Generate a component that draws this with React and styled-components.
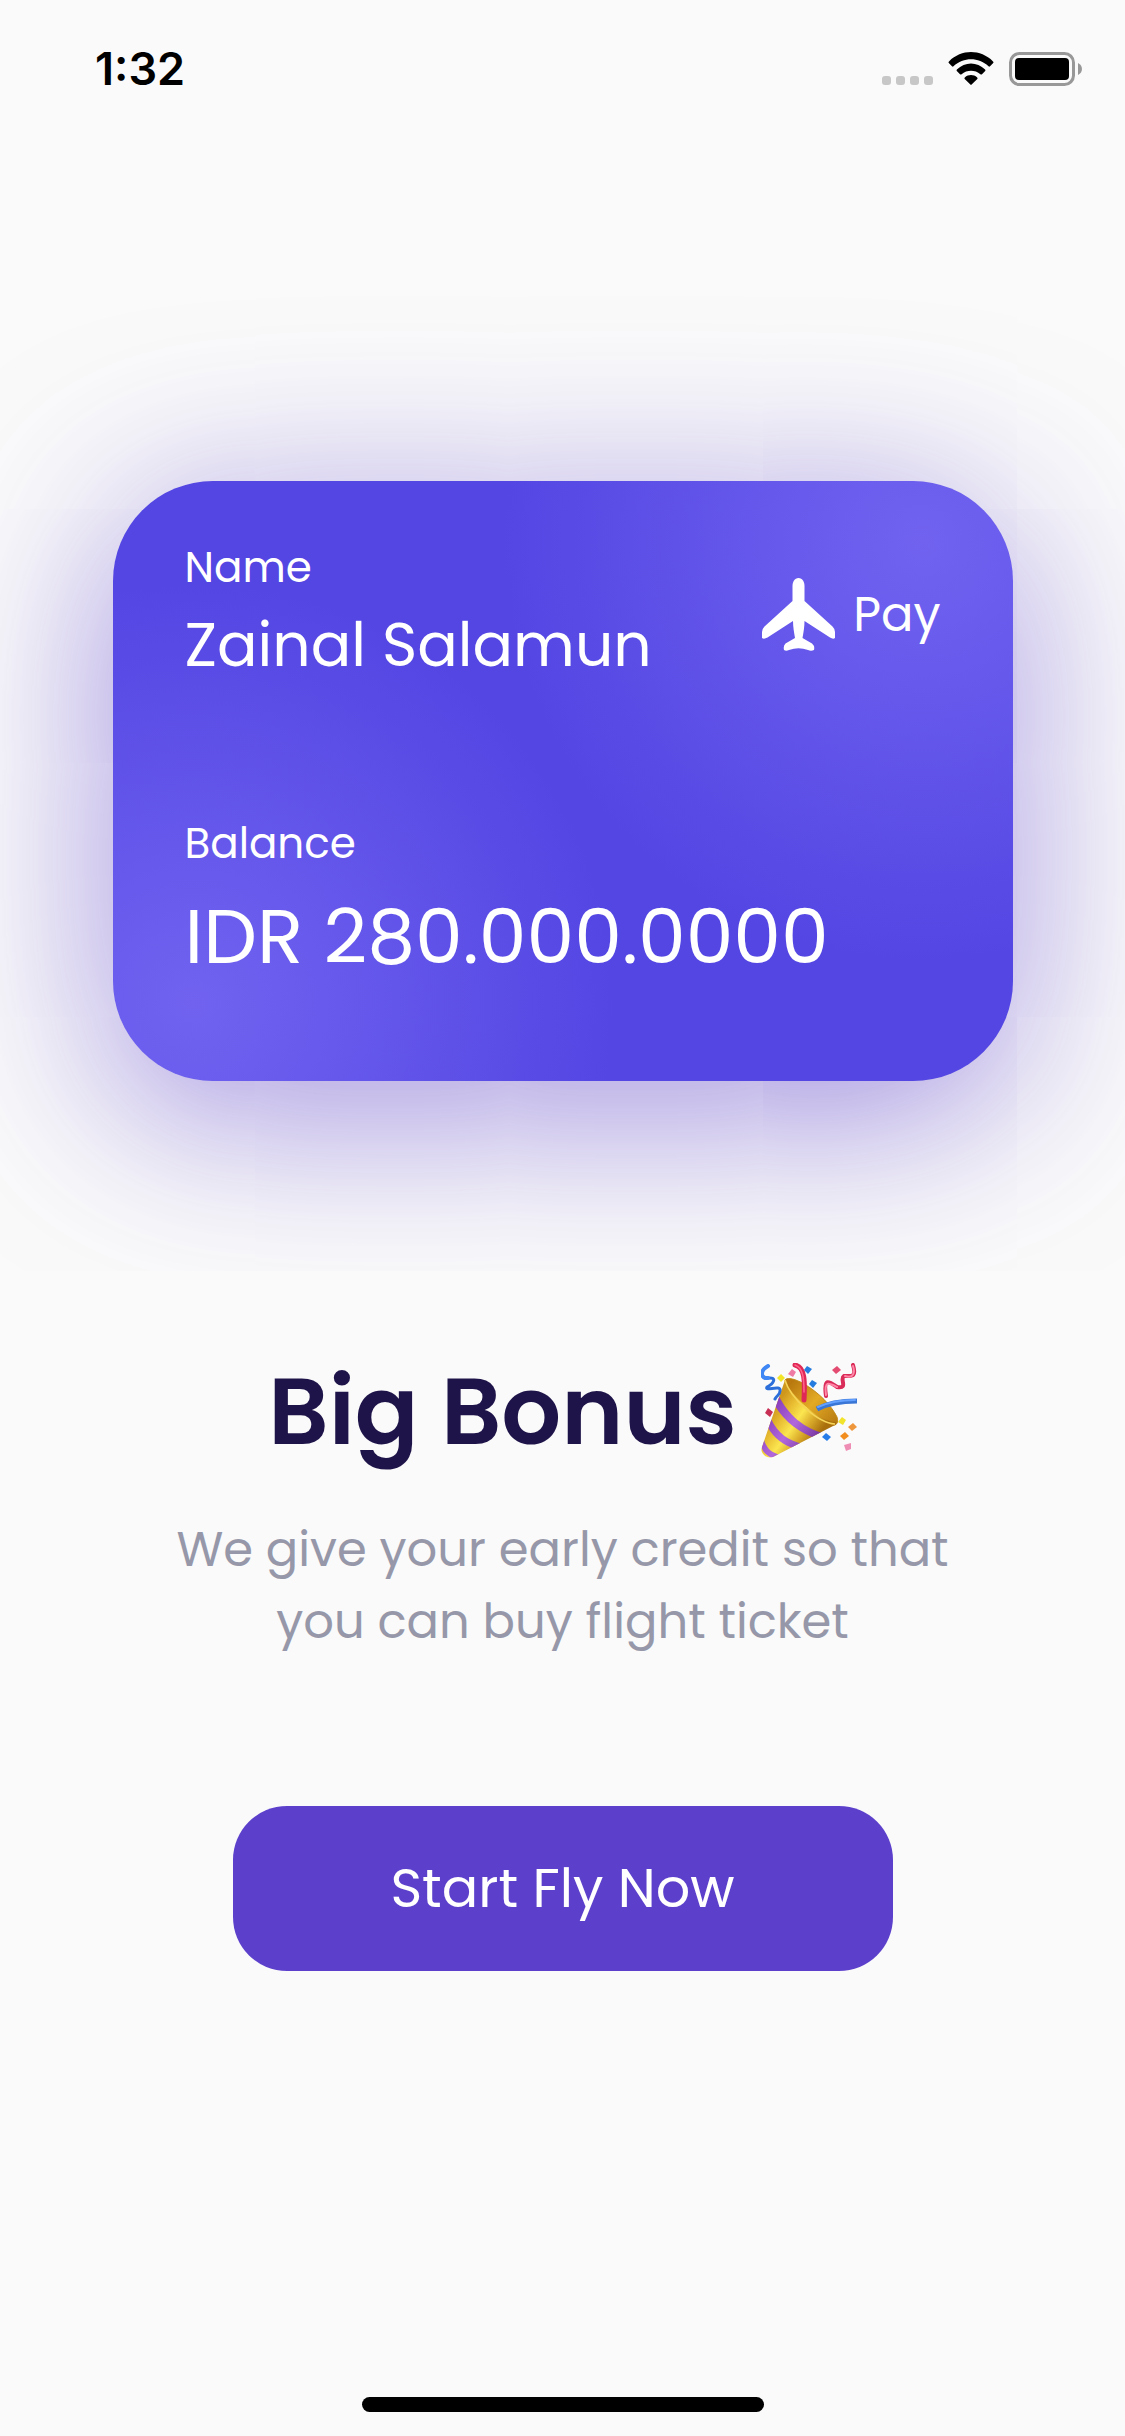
import React from "react";
import styled, { createGlobalStyle } from "styled-components";

const GlobalStyle = createGlobalStyle`
  *, *::before, *::after { box-sizing: border-box; }
  body {
    margin: 0;
    background: #fafafa;
    font-family: Poppins, Inter, "Liberation Sans", sans-serif;
    -webkit-font-smoothing: antialiased;
  }
`;

const Screen = styled.div`
  display: flex;
  flex-direction: column;
  min-height: 100vh;
  overflow: hidden;
`;

const StatusBar = styled.header`
  display: flex;
  align-items: center;
  justify-content: space-between;
  height: 138px;
  padding: 0 43px 0 95px;
`;

const Clock = styled.time`
  color: #000;
  font-family: Inter, sans-serif;
  font-size: 45px;
  font-weight: 600;
  line-height: 54px;
`;

const StatusIcons = styled.div`
  display: flex;
  align-items: flex-end;
  gap: 15px;
`;

const Content = styled.main`
  display: flex;
  flex: 1;
  flex-direction: column;
  align-items: center;
  padding-top: 343px;
`;

const WalletCard = styled.section`
  display: flex;
  flex-direction: column;
  justify-content: space-between;
  width: 80%;
  min-height: 600px;
  padding: 60px 72px 78px;
  border-radius: 100px;
  color: #fff;
  background:
    radial-gradient(circle 420px at 90% 10%, #7163f0 0%, rgba(113, 99, 240, 0) 100%),
    radial-gradient(circle 420px at 9% 87%, #7163f0 0%, rgba(113, 99, 240, 0) 100%),
    #5346e3;
  box-shadow: 0 30px 180px rgba(92, 64, 204, 0.6);
`;

const CardTop = styled.div`
  display: flex;
  align-items: flex-start;
  justify-content: space-between;
`;

const Label = styled.p`
  margin: 0;
  font-size: 42px;
  line-height: 54px;
`;

const HolderName = styled.p`
  margin: 0;
  font-size: 60px;
  line-height: 100px;
`;

const Balance = styled.p`
  margin: 0;
  font-size: 76px;
  line-height: 132px;
`;

const Brand = styled.div`
  display: flex;
  align-items: center;
  gap: 18px;
  padding-top: 37px;
  font-size: 48px;
  line-height: 72px;
`;

const Title = styled.h1`
  display: flex;
  align-items: center;
  gap: 24px;
  margin: 270px 0 0;
  color: #1f1449;
  font-size: 94px;
  font-weight: 600;
  line-height: 120px;
`;

const Description = styled.p`
  max-width: 800px;
  margin: 43px 0 0;
  color: #9698a9;
  font-size: 48px;
  line-height: 72px;
  text-align: center;
`;

const StartButton = styled.button`
  min-width: 660px;
  height: 165px;
  margin-top: 148px;
  border: 0;
  border-radius: 54px;
  color: #fff;
  background: #5c40cc;
  font-family: inherit;
  font-size: 54px;
  line-height: 81px;
  cursor: pointer;
`;

const HomeIndicator = styled.div`
  width: 402px;
  height: 15px;
  margin: auto 0 24px;
  border-radius: 8px;
  background: #000;
`;

const SignalDots = () => (
  <svg width="51" height="10" viewBox="0 0 51 10" fill="#c7c7c7" aria-hidden="true">
    {[0, 14, 28, 42].map((x) => (
      <rect key={x} x={x} y="0" width="9" height="9" rx="3" />
    ))}
  </svg>
);

const WifiIcon = () => (
  <svg width="46" height="34" viewBox="0 0 46 34" aria-hidden="true">
    <path d="M1 11.3Q0 10.3 1 9.4C13.5-3 32.500-3 45 9.400Q46 10.300 45 11.300L42 14.300Q41.300 15 40.500 14.300C30.500 5 15.500 5 5.500 14.300Q4.700 15 4 14.300Z" />
    <path d="M8.800 19Q8.200 18.300 8.900 17.600C17 9.400 29 9.400 37.100 17.600Q37.800 18.300 37.200 19L34 22.200Q33.200 22.900 32.400 22.200C27 17.600 19 17.600 13.600 22.200Q12.800 22.900 12 22.200Z" />
    <path d="M16.700 27Q16 26.200 16.800 25.500C20.500 22.300 25.500 22.300 29.200 25.500Q30 26.200 29.300 27L23.600 32.600Q23 33.200 22.400 32.600Z" />
  </svg>
);

const BatteryIcon = () => (
  <svg width="73" height="34" viewBox="0 0 73 34" aria-hidden="true">
    <rect x="1.500" y="1.500" width="63" height="31" rx="9" fill="none" stroke="#989898" strokeWidth="3" />
    <rect x="6" y="6" width="54" height="22" rx="4" />
    <path d="M69 11C74.300 13.500 74.300 20.500 69 23Z" fill="#989898" />
  </svg>
);

const PlaneIcon = () => (
  <svg width="73" height="73" viewBox="0 0 73 73" fill="#fff" aria-hidden="true">
    <path d="M36.500 0C40.500 0 42.500 4 42.500 8V23L70.500 48.500Q73 51 73 54V60Q71 61.500 68 59.500L42.500 43C42.500 49 41.500 54 40.500 60L50 65.500Q53 68 52 72Q49 73.500 46 72Q36.500 68.500 27 72Q24 73.500 22 72Q21 68 23.500 65.500L33 60C32 54 31 49 31 43L5.500 59.500Q2 61.500 0 60V54Q0 51 2.500 48.500L30.500 23V8C30.500 4 32.500 0 36.500 0Z" />
  </svg>
);

const PartyPopper = () => (
  <svg width="96" height="96" viewBox="0 0 96 96" role="img" aria-label="Party popper">
    <defs>
      <linearGradient id="cone" x1="13" y1="45" x2="55" y2="75" gradientUnits="userSpaceOnUse">
        <stop offset="0" stopColor="#cf981d" />
        <stop offset="0.25" stopColor="#e9bd32" />
        <stop offset="0.5" stopColor="#fbe650" />
        <stop offset="0.72" stopColor="#dcae2c" />
        <stop offset="1" stopColor="#a96f0d" />
      </linearGradient>
      <linearGradient id="mouth" x1="30" y1="20" x2="74" y2="60" gradientUnits="userSpaceOnUse">
        <stop offset="0" stopColor="#b9790f" />
        <stop offset="0.5" stopColor="#e3aa25" />
        <stop offset="1" stopColor="#b87b12" />
      </linearGradient>
      <linearGradient id="stripe" x1="10" y1="40" x2="60" y2="75" gradientUnits="userSpaceOnUse">
        <stop offset="0" stopColor="#8438b8" />
        <stop offset="0.5" stopColor="#b268dc" />
        <stop offset="1" stopColor="#713099" />
      </linearGradient>
      <clipPath id="coneShape">
        <path d="M24 17C29 31 57 59 75 59Q76 61 74 62L12 94Q4 96 1 89Q0 87 1 84Z" />
      </clipPath>
    </defs>
    <path d="M24 17C30 10 64 30 76 54Q78 60 74 62C57 63 27 37 24 17Z" fill="url(#mouth)" stroke="#c18a19" />
    <g clipPath="url(#coneShape)">
      <rect width="96" height="96" fill="url(#cone)" />
      <path d="M18 33C26 50 43 67 67 71L57 76C39 71 23 58 14 43Z" fill="url(#stripe)" />
      <path d="M10 56C17 70 27 78 43 81L34 86C22 82 13 75 7 65Z" fill="url(#stripe)" />
      <path d="M3 77C6 86 11 90 20 92L13 96C6 93 1 89 0 82Z" fill="url(#stripe)" />
    </g>
    <path d="M24 17C29 35 57 60 74 61" fill="none" stroke="#f6d457" strokeWidth="1.500" />
    <g fill="none" strokeLinecap="round">
      <path d="M7 3C-2 8 0 16 7 15C17 14 12 21 6 24C3 29 21 21 19 28C19 32 16 32 14 36" stroke="#2c6fda" strokeWidth="3" />
      <path d="M7 3C-2 8 0 16 7 15" stroke="#3f87f5" strokeWidth="4" />
      <path d="M34 2C44 4 44 18 43 37" stroke="#df2855" strokeWidth="5" />
      <path d="M34 2C42 5 43 14 43 29" stroke="#ff658a" strokeWidth="1.500" />
      <path d="M65 33C62 13 69 19 76 24C88 26 78 16 83 13C90 13 96 15 92 2" stroke="#d92c58" strokeWidth="4" />
      <path d="M65 32C63 17 68 20 76 24M84 13C93 16 94 9 92 3" stroke="#ff86a7" strokeWidth="2" />
      <path d="M56 46C67 40 80 38 96 38" stroke="#3976d6" strokeWidth="5" strokeLinecap="butt" />
      <path d="M57 44C68 39 80 37 94 37" stroke="#65a1ff" strokeWidth="2" />
    </g>
    <g>
      <path d="M20 11L24 15L20 19L16 15Z" fill="#f3e527" />
      <path d="M31 6L35 9L32 14L27 11Z" fill="#ee7ba4" />
      <path d="M46 3L51 6L47 11L43 7Z" fill="#277cdf" />
      <path d="M51 17L56 20L52 25L48 21Z" fill="#277cdf" />
      <path d="M76 3L80 7L75 11L71 7Z" fill="#e34b70" />
      <path d="M7 45L12 49L9 54L4 50Z" fill="#c82f55" />
      <path d="M81 54L85 57L82 62L77 59Z" fill="#f1e42b" />
      <path d="M92 60L96 64L91 68L87 64Z" fill="#ee963b" />
      <path d="M84 69L88 73L83 77L79 73Z" fill="#f28d20" />
      <path d="M65 70L70 74L66 78L61 74Z" fill="#277ce8" />
      <path d="M83 82L90 80L90 86L85 88Z" fill="#ef8eb4" />
    </g>
  </svg>
);

export default function App() {
  return (
    <Screen>
      <GlobalStyle />
      <StatusBar>
        <Clock>1:32</Clock>
        <StatusIcons>
          <SignalDots />
          <WifiIcon />
          <BatteryIcon />
        </StatusIcons>
      </StatusBar>
      <Content>
        <WalletCard>
          <CardTop>
            <div>
              <Label>Name</Label>
              <HolderName>Zainal Salamun</HolderName>
            </div>
            <Brand>
              <PlaneIcon />
              <span>Pay</span>
            </Brand>
          </CardTop>
          <div>
            <Label>Balance</Label>
            <Balance>IDR 280.000.0000</Balance>
          </div>
        </WalletCard>
        <Title>
          Big Bonus
          <PartyPopper />
        </Title>
        <Description>
          We give your early credit so that
          <br />
          you can buy flight ticket
        </Description>
        <StartButton type="button">Start Fly Now</StartButton>
        <HomeIndicator />
      </Content>
    </Screen>
  );
}
